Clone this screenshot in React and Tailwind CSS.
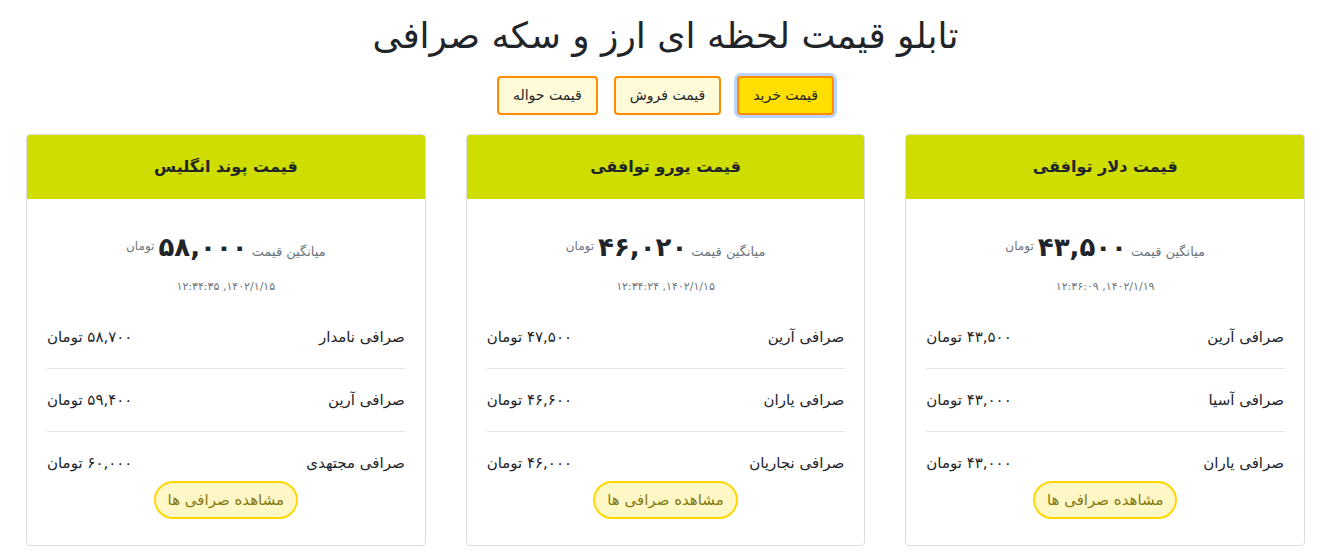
import React, { useState } from 'react';

const CARDS = [
  {
    title: 'قیمت دلار توافقی',
    avg: '۴۳,۵۰۰',
    date: '۱۴۰۲/۱/۱۹, ۱۲:۳۶:۰۹',
    rows: [
      { name: 'صرافی آرین', price: '۴۳,۵۰۰' },
      { name: 'صرافی آسیا', price: '۴۳,۰۰۰' },
      { name: 'صرافی یاران', price: '۴۳,۰۰۰' },
    ],
  },
  {
    title: 'قیمت یورو توافقی',
    avg: '۴۶,۰۲۰',
    date: '۱۴۰۲/۱/۱۵, ۱۲:۳۴:۲۴',
    rows: [
      { name: 'صرافی آرین', price: '۴۷,۵۰۰' },
      { name: 'صرافی یاران', price: '۴۶,۶۰۰' },
      { name: 'صرافی نجاریان', price: '۴۶,۰۰۰' },
    ],
  },
  {
    title: 'قیمت پوند انگلیس',
    avg: '۵۸,۰۰۰',
    date: '۱۴۰۲/۱/۱۵, ۱۲:۳۴:۳۵',
    rows: [
      { name: 'صرافی نامدار', price: '۵۸,۷۰۰' },
      { name: 'صرافی آرین', price: '۵۹,۴۰۰' },
      { name: 'صرافی مجتهدی', price: '۶۰,۰۰۰' },
    ],
  },
];

const TABS = ['قیمت خرید', 'قیمت فروش', 'قیمت حواله'];

function PriceCard({ card }) {
  return (
    <div className="border border-[#dcdcdc] rounded-[4px] bg-white overflow-hidden">
      <div className="h-[64px] bg-[#cfdd00] flex items-center justify-center">
        <h2 className="text-[16px] font-bold text-[#212529]">{card.title}</h2>
      </div>
      <div className="px-5 pt-[30px] pb-[26px]">
        <div className="flex items-baseline justify-center gap-1 h-[36px]">
          <span className="text-[13px] text-[#6c757d]">میانگین قیمت</span>
          <span className="text-[26px] leading-[36px] font-bold text-[#212529]">{card.avg}</span>
          <span className="text-[12px] text-[#6c757d] -translate-y-[6px]">تومان</span>
        </div>
        <div className="mt-3 text-center text-[11px] leading-[20px] text-[#6c757d]">{card.date}</div>
        <div className="mt-[9px]">
          {card.rows.map((r, i) => (
            <div
              key={i}
              className={`flex items-center justify-between text-[15px] leading-[24px] text-[#212529] ${
                i < card.rows.length - 1 ? 'py-[19px] border-b border-[#e3e3e3]' : 'pt-[19px]'
              }`}
            >
              <span>{r.name}</span>
              <span>{r.price} تومان</span>
            </div>
          ))}
        </div>
        <div className="flex justify-center mt-[6px]">
          <button className="h-[38px] px-[12px] rounded-full border-2 border-[#ffd700] bg-[#fff8c6] text-[15px] text-[#85790f]">
            مشاهده صرافی ها
          </button>
        </div>
      </div>
    </div>
  );
}

export default function App() {
  const [tab, setTab] = useState(0);

  return (
    <div dir="rtl" className="min-h-screen bg-white font-['DejaVu_Sans',sans-serif] text-[#212529] pr-[36px] pl-[26px]">
      <h1 className="pt-2 text-center text-[36px] leading-[56px] font-normal">تابلو قیمت لحظه ای ارز و سکه صرافی</h1>

      <div className="mt-3 flex justify-center gap-4">
        {TABS.map((t, i) => (
          <button
            key={t}
            onClick={() => setTab(i)}
            className={`h-[39px] px-[14px] rounded-[4px] border-2 border-[#ff8c00] text-[14px] ${
              tab === i ? 'bg-[#ffdf00] ring-[3px] ring-[#b9d5fb]' : 'bg-[#fffbd8]'
            }`}
          >
            {t}
          </button>
        ))}
      </div>

      <div className="mt-[19px] grid grid-cols-3 gap-10">
        {CARDS.map((c) => (
          <PriceCard key={c.title} card={c} />
        ))}
      </div>
    </div>
  );
}
